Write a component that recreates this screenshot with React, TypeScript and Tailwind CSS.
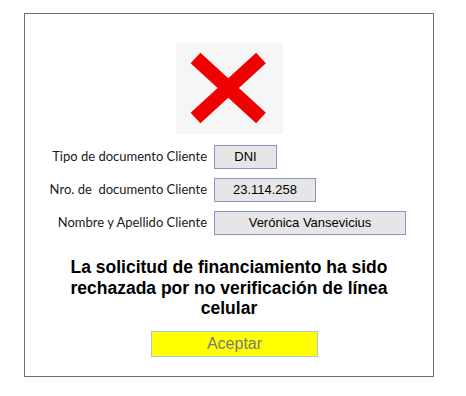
import React from 'react';

const fields = [
  { label: 'Tipo de documento Cliente', value: 'DNI', width: 'w-[63px]' },
  { label: 'Nro. de\u00a0 documento Cliente', value: '23.114.258', width: 'w-[102px]' },
  { label: 'Nombre y Apellido Cliente', value: 'Verónica Vansevicius', width: 'w-[192px]' },
];

export default function App() {
  return (
    <div className="w-[466px] h-[396px] bg-white pt-[13px] pl-[24px]">
      <div className="w-[410px] h-[364px] border border-[#6e6e6e] flex flex-col items-center">
        {/* rejected icon */}
        <div className="mt-[29px] ml-[1px] w-[107px] h-[91px] bg-[#f6f6f6]">
          <svg width="107" height="91" viewBox="0 0 107 91">
            <line x1="19.5" y1="15" x2="85" y2="75" stroke="#f00000" strokeWidth="14.5" />
            <line x1="85" y1="15" x2="19.5" y2="75" stroke="#f00000" strokeWidth="14.5" />
          </svg>
        </div>

        <div className="self-stretch mt-[11px] flex flex-col gap-[9px]">
          {fields.map((f) => (
            <div key={f.label} className="flex items-center">
              <div className="w-[182px] text-right text-[13px] text-[#1a1a1a] font-['Lato',sans-serif]">
                {f.label}
              </div>
              <div
                className={`${f.width} ml-[7px] h-[24px] bg-[#e6e6e6] border border-[#8796c0] flex items-center justify-center text-[13px] text-black font-['Liberation_Sans',Arial,sans-serif]`}
              >
                {f.value}
              </div>
            </div>
          ))}
        </div>

        <p className="mt-[22px] w-[336px] text-center font-bold text-[17.5px] leading-[20.5px] text-black font-['Liberation_Sans',Arial,sans-serif]">
          La solicitud de financiamiento ha sido rechazada por no verificación de línea celular
        </p>

        <button className="mt-[12px] ml-[11px] w-[167px] h-[26px] bg-[#ffff00] border border-[#a8c4e2] text-[16px] text-[#7a7a7a] font-['Liberation_Sans',Arial,sans-serif] flex items-center justify-center">
          Aceptar
        </button>
      </div>
    </div>
  );
}
